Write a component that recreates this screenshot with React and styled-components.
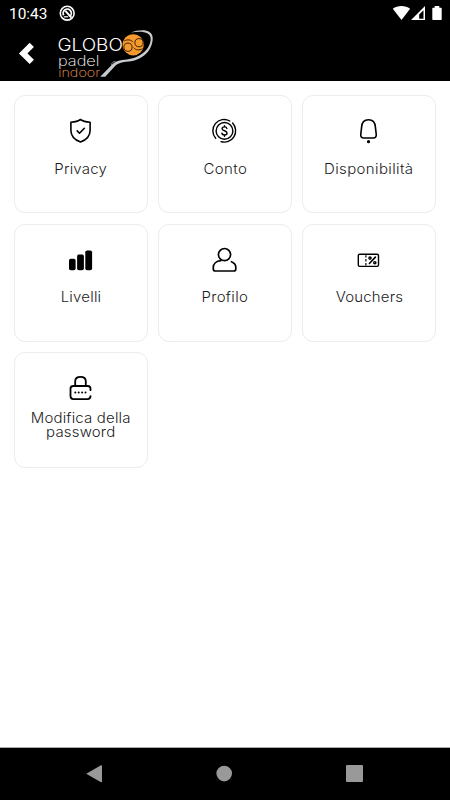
import React from 'react';
import styled, { createGlobalStyle } from 'styled-components';

const GlobalStyle = createGlobalStyle`
  * { box-sizing: border-box; }
  html, body { margin: 0; background: #fff; }
  svg { display: block; flex: none; }
`;

const Screen = styled.div`
  width: 450px;
  height: 800px;
  display: flex;
  flex-direction: column;
  background: #fff;
  overflow: hidden;
`;

const StatusBar = styled.div`
  height: 27px;
  flex: none;
  padding: 0 8px 0 9px;
  display: flex;
  align-items: center;
  background: #000;
  color: #fff;
`;

const Clock = styled.span`
  width: 50px;
  font: 400 15.4px/27px Roboto, sans-serif;
  padding-top: 1px;
  white-space: nowrap;
`;

const StatusIcons = styled.div`
  margin-left: auto;
  display: flex;
`;

const Header = styled.header`
  height: 54px;
  flex: none;
  display: flex;
  align-items: center;
  background: #000;
`;

const BackButton = styled.button`
  width: 55px;
  height: 54px;
  padding: 0 0 0 18px;
  border: 0;
  background: none;
`;

const LogoText = styled.text`
  font-family: Inter, 'Liberation Sans', sans-serif;
  font-weight: ${(p) => p.$weight || 300};
  font-size: ${(p) => p.$size}px;
`;

const Grid = styled.main`
  flex: 1;
  padding: 13.9px 14px 0;
  display: grid;
  grid-template-columns: repeat(3, 134px);
  grid-template-rows: 118.5px 118.5px 116px;
  gap: 10.2px 10px;
`;

const Card = styled.div`
  border: 1px solid #ececec;
  border-radius: 11px;
  padding-top: 21px;
  display: flex;
  flex-direction: column;
  align-items: center;
`;

const IconSlot = styled.div`
  height: 28px;
  display: flex;
  align-items: center;
`;

const Label = styled.div`
  margin-top: ${(p) => (p.$multi ? 8.7 : 15.7)}px;
  font-family: Inter, 'Liberation Sans', sans-serif;
  font-weight: 300;
  font-size: 14px;
  line-height: ${(p) => (p.$multi ? 14.5 : 15)}px;
  letter-spacing: ${(p) => p.$spacing}px;
  color: #1c1c1c;
  text-align: center;
  white-space: pre-line;
  transform: scaleX(1.07);
`;

const NavBar = styled.nav`
  height: 53px;
  flex: none;
  display: flex;
  justify-content: space-between;
  align-items: center;
  padding: 0 87px 0 86px;
  border-top: 1px solid #aaa;
  background: #000;
`;

const Icon = ({ children }) => (
  <svg width="28" height="28" viewBox="0.5 0.6 28 28" fill="none" stroke="#000" strokeWidth="1.6" strokeLinecap="round" strokeLinejoin="round">
    {children}
  </svg>
);

const ShieldIcon = () => (
  <Icon>
    <path d="M14 3.1 C11.5 5 8 5.6 4.4 5.8 V14 C4.4 19.5 8.5 23.5 14 25.6 C19.5 23.5 23.6 19.5 23.6 14 V5.8 C20 5.6 16.5 5 14 3.1Z" />
    <path d="M10.7 14.5 13 16.8 17.8 11.9" />
  </Icon>
);

const CoinIcon = () => (
  <Icon>
    <circle cx="14" cy="14.5" r="8.4" strokeWidth="1.4" />
    <path d="M5.2 21.9 A11.3 11.3 0 0 1 19.3 4.6 M22.1 6.7 A11.3 11.3 0 0 1 10.5 25.2" strokeWidth="1.4" />
    <path d="M16.4 12.1 C16.2 10.9 15.2 10.5 14 10.5 C12.6 10.5 11.6 11.2 11.6 12.3 C11.6 14.8 16.5 13.9 16.5 16.6 C16.5 17.8 15.4 18.5 14 18.5 C12.5 18.5 11.5 17.8 11.4 16.7 M14 9.2V10.5 M14 18.5V19.8" strokeWidth="1.4" />
  </Icon>
);

const BellIcon = () => (
  <Icon>
    <path d="M14 3.4 C9.8 3.4 7.3 6.5 7.1 10.8 L6.3 17.6 C5.9 20.4 7.1 21.6 9.2 21.6 H18.8 C20.9 21.6 22.1 20.4 21.7 17.6 L20.9 10.8 C20.7 6.5 18.2 3.4 14 3.4Z" />
    <circle cx="14" cy="25.3" r="1.6" fill="#000" stroke="none" />
  </Icon>
);

const BarsIcon = () => (
  <Icon>
    <g fill="#000" stroke="none">
      <rect x="2.5" y="13.4" width="6.6" height="11.5" rx="1.8" />
      <rect x="10.6" y="9.2" width="6.8" height="15.7" rx="1.8" />
      <rect x="18.8" y="5" width="6.8" height="19.9" rx="1.8" />
    </g>
  </Icon>
);

const UserIcon = () => (
  <Icon>
    <circle cx="14" cy="9.2" r="6.1" strokeWidth="1.7" />
    <path d="M10.3 15.3 C5.8 15.7 2.8 18.3 2.8 21.9 V23.5 C2.8 25.1 3.6 25.6 5 25.6 H23 C24.4 25.6 25.3 25.1 25.3 23.5 V21.9 C25.3 19.3 23.7 17.4 21 16.3" strokeWidth="1.7" />
  </Icon>
);

const VoucherIcon = () => (
  <Icon>
    <rect x="3.8" y="8.8" width="20.2" height="12.2" rx="1.4" strokeWidth="1.4" />
    <path d="M11.4 9.9V12 M11.4 13.7V16 M11.4 17.7V20" strokeWidth="1.2" strokeLinecap="butt" />
    <path d="M20.9 11.7 14.9 18.1" strokeWidth="1.6" />
    <circle cx="15.5" cy="12.7" r="1.1" strokeWidth="1.4" />
    <circle cx="20.3" cy="17.3" r="1.1" strokeWidth="1.4" />
  </Icon>
);

const LockIcon = () => (
  <Icon>
    <path d="M8.7 12.6V7.9 C8.7 5 10.8 3.5 14 3.5 C17.2 3.5 19.3 5 19.3 7.9V12.6" strokeWidth="1.8" />
    <path d="M24 16.8V15.4 C24 13.4 23 12.6 21.3 12.6 H6.7 C5 12.6 4 13.4 4 15.4V22.7 C4 24.7 5 25.7 6.9 25.7H21 C23 25.7 24 24.9 24 22.7" strokeWidth="1.8" />
    <g fill="#000" stroke="none">
      <circle cx="8.8" cy="19" r="1" />
      <circle cx="12.2" cy="19" r="1" />
      <circle cx="15.6" cy="19" r="1" />
      <circle cx="19" cy="19" r="1" />
    </g>
  </Icon>
);

const Logo = () => (
  <svg width="100" height="54" viewBox="0 0 100 54">
    <LogoText $size={17} x="2.4" y="24.3" fill="#fff" textLength="65.5" lengthAdjust="spacingAndGlyphs">GLOBO</LogoText>
    <LogoText $size={14} $weight={200} x="3" y="38.9" fill="#fff" textLength="41.5" lengthAdjust="spacingAndGlyphs">padel</LogoText>
    <LogoText $size={12.2} $weight={200} x="3.2" y="49.8" fill="#f29b5c" textLength="42" lengthAdjust="spacingAndGlyphs">indoor</LogoText>
    <circle cx="78.2" cy="17.8" r="10.6" fill="#f69a2e" />
    <g fill="none" stroke="#2a1600" strokeWidth=".9">
      <circle cx="73" cy="20.2" r="4.1" />
      <circle cx="84" cy="15.7" r="4.1" />
      <path d="M69.2 13.9C72.5 12.2 76.2 12.6 78 15.2" />
      <path d="M78.6 20.6C80.5 23.3 84.5 23.6 87.6 21.6" />
    </g>
    <path d="M76 5.5 C86 1.7 98 2.1 97.7 11.7 C97.4 23.2 87.8 33.3 73.5 34.5 C67 35 62.4 36.1 59.4 39.8 L50.2 49.7 H45.2 L56.2 38.5 C60 34 65 33.2 71.9 32.5 C84.8 31.1 95 23 95.7 12.3 C96 4.6 86.5 3.7 76 5.5Z" fill="#c8cccf" />
    <path d="M60.5 34.3C57.6 34.4 56.6 36 56.4 38.2" fill="none" stroke="#999" strokeWidth=".8" />
  </svg>
);

const cards = [
  { label: 'Privacy', icon: ShieldIcon, spacing: 0.2 },
  { label: 'Conto', icon: CoinIcon, spacing: 0.35 },
  { label: 'Disponibilità', icon: BellIcon, spacing: 0.35 },
  { label: 'Livelli', icon: BarsIcon, spacing: 0.2 },
  { label: 'Profilo', icon: UserIcon, spacing: 0.3 },
  { label: 'Vouchers', icon: VoucherIcon, spacing: 0.15 },
  { label: 'Modifica della\npassword', icon: LockIcon, spacing: 0.17, multi: true },
];

export default function App() {
  return (
    <Screen>
      <GlobalStyle />
      <StatusBar>
        <Clock>10:43</Clock>
        <svg width="17" height="27" viewBox="0 0 17 27" fill="none" stroke="#fff">
          <circle cx="8.2" cy="13.2" r="6.9" strokeWidth="1.6" />
          <path d="M4.7 15.2A4.1 4.1 0 1 1 10.6 16.5" strokeWidth="1.8" />
          <path d="M6.4 10.8 12.4 17.6" strokeWidth="2" />
          <path d="M4.8 16.8H9.2" strokeWidth="1.2" />
        </svg>
        <StatusIcons>
          <svg width="50" height="27" viewBox="392 0 50 27" fill="#fff">
            <path d="M392.8 8.7C397.5 5.1 405.4 5.1 410.1 8.7L401.5 20.1Z" />
            <path fillRule="evenodd" d="M411 20 425 6V20ZM419.2 18.7H423.5V10.2L419.2 14.4Z" />
            <path d="M433 7.7H434.7V6H439.3V7.7H441Q441.7 7.7 441.7 8.5V19.2Q441.7 20 441 20H433Q432.3 20 432.3 19.2V8.5Q432.3 7.7 433 7.7Z" />
          </svg>
        </StatusIcons>
      </StatusBar>
      <Header>
        <BackButton aria-label="Indietro">
          <svg width="17" height="24" viewBox="0 0 17 24" fill="none" stroke="#fff" strokeWidth="6">
            <path d="M13.8 2.9 5.2 11.4 13.8 19.9" />
          </svg>
        </BackButton>
        <Logo />
      </Header>
      <Grid>
        {cards.map(({ label, icon: Glyph, spacing, multi }) => (
          <Card key={label}>
            <IconSlot><Glyph /></IconSlot>
            <Label $spacing={spacing} $multi={multi}>{label}</Label>
          </Card>
        ))}
      </Grid>
      <NavBar>
        <svg width="16" height="18" viewBox="0 0 16 18"><path d="M.2 8.7 15 .3Q16 0 16 1V16.6Q16 17.6 15 17.3Z" fill="#999" /></svg>
        <svg width="16" height="18" viewBox="0 0 16 18"><circle cx="8.2" cy="8.6" r="7.8" fill="#999" /></svg>
        <svg width="17" height="18" viewBox="0 0 17 18"><rect width="17" height="17" rx="1" fill="#999" /></svg>
      </NavBar>
    </Screen>
  );
}
